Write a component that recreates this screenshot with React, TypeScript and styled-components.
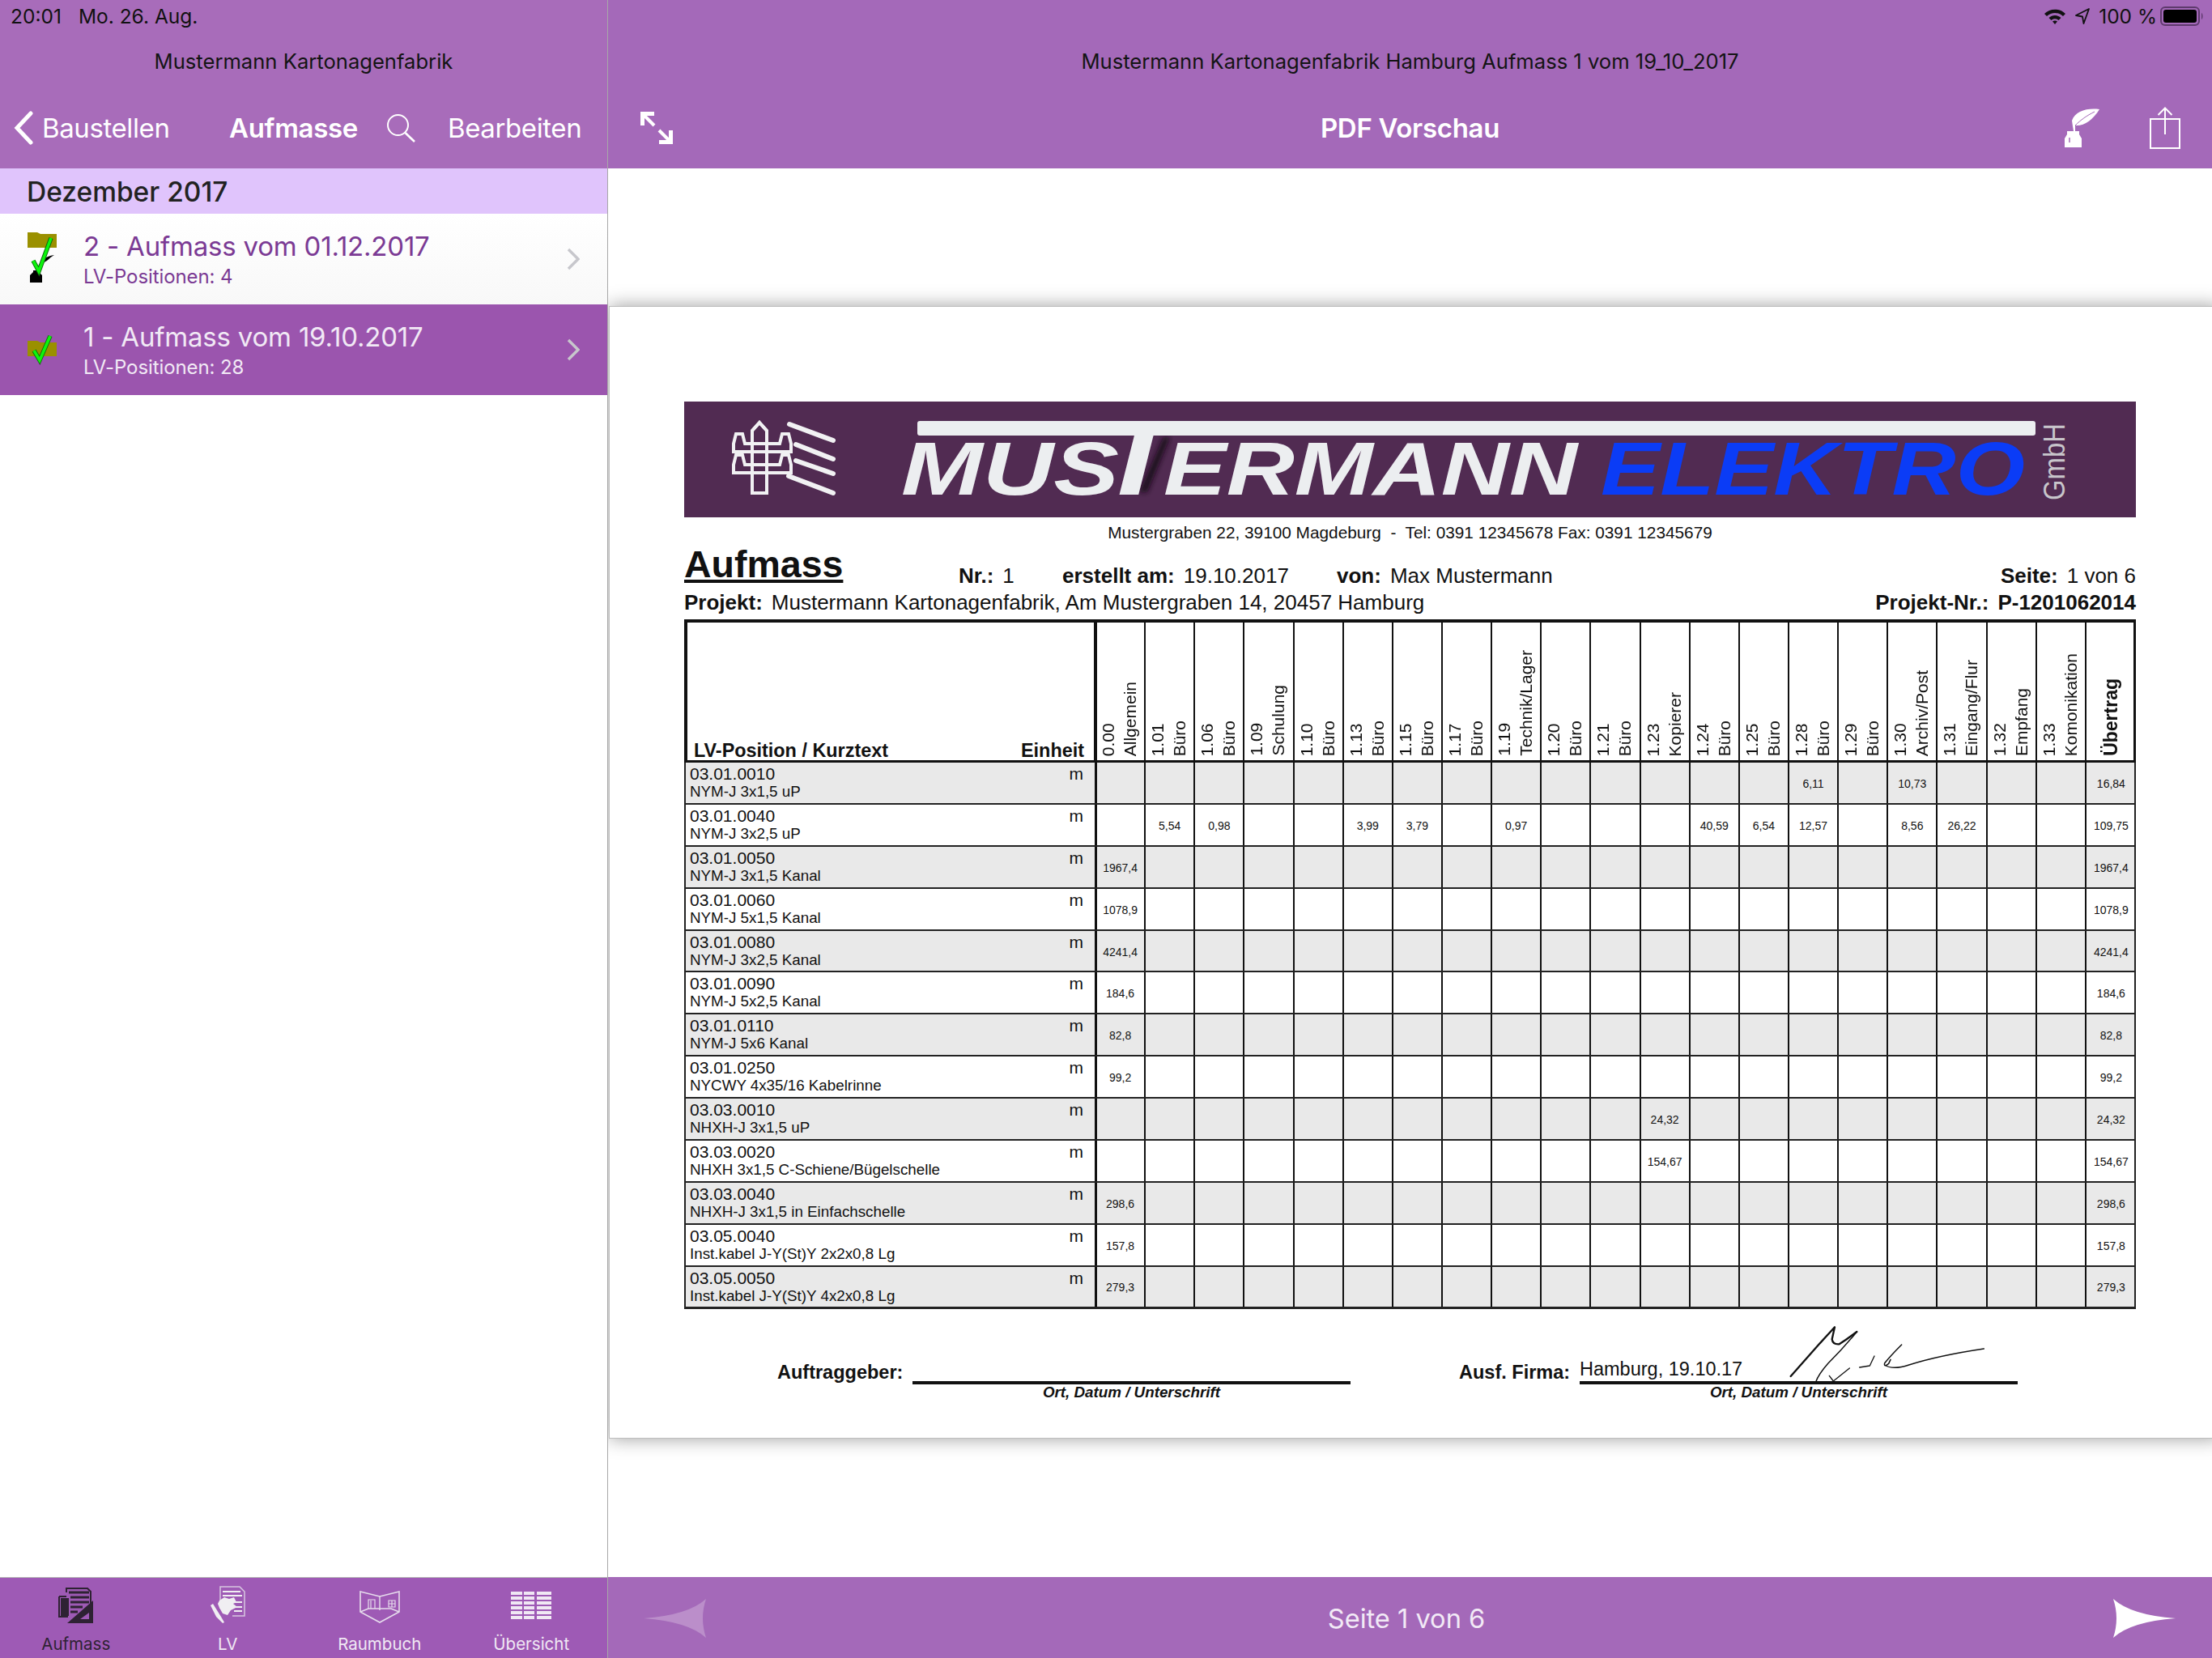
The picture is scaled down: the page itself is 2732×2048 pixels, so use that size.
import React from "react";
import styled, { createGlobalStyle } from "styled-components";

const ui = `Inter, "Noto Sans", sans-serif`;
const doc = `"Liberation Sans", Arial, sans-serif`;

const GlobalStyle = createGlobalStyle`
  * { box-sizing: border-box; }
  html, body { margin: 0; padding: 0; background: #fff; }
  #root { width: 2732px; height: 2048px; overflow: hidden; }
`;

const columns = [
  ["0.00", "Allgemein"], ["1.01", "Büro"], ["1.06", "Büro"], ["1.09", "Schulung"], ["1.10", "Büro"],
  ["1.13", "Büro"], ["1.15", "Büro"], ["1.17", "Büro"], ["1.19", "Technik/Lager"], ["1.20", "Büro"],
  ["1.21", "Büro"], ["1.23", "Kopierer"], ["1.24", "Büro"], ["1.25", "Büro"], ["1.28", "Büro"],
  ["1.29", "Büro"], ["1.30", "Archiv/Post"], ["1.31", "Eingang/Flur"], ["1.32", "Empfang"], ["1.33", "Komonikation"],
];

type Row = { code: string; text: string; values: Record<number, string>; total: string };

const rows: Row[] = [
  { code: "03.01.0010", text: "NYM-J 3x1,5 uP", values: { 14: "6,11", 16: "10,73" }, total: "16,84" },
  { code: "03.01.0040", text: "NYM-J 3x2,5 uP", values: { 1: "5,54", 2: "0,98", 5: "3,99", 6: "3,79", 8: "0,97", 12: "40,59", 13: "6,54", 14: "12,57", 16: "8,56", 17: "26,22" }, total: "109,75" },
  { code: "03.01.0050", text: "NYM-J 3x1,5 Kanal", values: { 0: "1967,4" }, total: "1967,4" },
  { code: "03.01.0060", text: "NYM-J 5x1,5 Kanal", values: { 0: "1078,9" }, total: "1078,9" },
  { code: "03.01.0080", text: "NYM-J 3x2,5 Kanal", values: { 0: "4241,4" }, total: "4241,4" },
  { code: "03.01.0090", text: "NYM-J 5x2,5 Kanal", values: { 0: "184,6" }, total: "184,6" },
  { code: "03.01.0110", text: "NYM-J 5x6 Kanal", values: { 0: "82,8" }, total: "82,8" },
  { code: "03.01.0250", text: "NYCWY 4x35/16 Kabelrinne", values: { 0: "99,2" }, total: "99,2" },
  { code: "03.03.0010", text: "NHXH-J 3x1,5 uP", values: { 11: "24,32" }, total: "24,32" },
  { code: "03.03.0020", text: "NHXH 3x1,5 C-Schiene/Bügelschelle", values: { 11: "154,67" }, total: "154,67" },
  { code: "03.03.0040", text: "NHXH-J 3x1,5 in Einfachschelle", values: { 0: "298,6" }, total: "298,6" },
  { code: "03.05.0040", text: "Inst.kabel J-Y(St)Y 2x2x0,8 Lg", values: { 0: "157,8" }, total: "157,8" },
  { code: "03.05.0050", text: "Inst.kabel J-Y(St)Y 4x2x0,8 Lg", values: { 0: "279,3" }, total: "279,3" },
];

const Screen = styled.div`
  display: grid;
  grid-template-columns: 751px 1fr;
  width: 2732px;
  height: 2048px;
  font-family: ${ui};
`;

const Sidebar = styled.aside`
  display: flex;
  flex-direction: column;
  border-right: 1px solid #a8a8a8;
  background: #fff;
`;

const Main = styled.main`
  display: flex;
  flex-direction: column;
  min-width: 0;
`;

const NavBar = styled.header<{ $bg: string }>`
  height: 208px;
  flex: none;
  background: ${(p) => p.$bg};
  display: flex;
  flex-direction: column;
`;

const StatusBar = styled.div`
  height: 40px;
  display: flex;
  align-items: center;
  justify-content: space-between;
  color: #111;
  font-size: 24.5px;
`;

const StatusLeft = styled.div`
  display: flex;
  gap: 21px;
  padding-left: 13px;
`;

const StatusRight = styled.div`
  display: flex;
  align-items: center;
  justify-content: flex-end;
  width: 100%;
  padding-right: 9px;
`;

const BarTitle = styled.div`
  height: 70px;
  display: flex;
  align-items: center;
  justify-content: center;
  color: #141414;
  font-size: 25.6px;
`;

const SideNavRow = styled.div`
  height: 96px;
  display: grid;
  grid-template-columns: 283px 194px 74px 1fr;
  align-items: center;
  color: #fff;
  font-size: 33px;
  letter-spacing: -0.4px;
`;

const BackLink = styled.div`
  display: flex;
  align-items: center;
  gap: 11px;
  padding-left: 17px;
`;

const NavHeading = styled.div`
  color: #fff;
  font-size: 33px;
  font-weight: 600;
  letter-spacing: -0.3px;
`;

const EditLink = styled.div`
  padding-left: 2px;
`;

const MainNavRow = styled.div`
  height: 96px;
  display: grid;
  grid-template-columns: 1fr auto 1fr;
  align-items: center;
`;

const ExpandWrap = styled.div`
  padding-left: 39px;
  display: flex;
`;

const ActionIcons = styled.div`
  display: flex;
  justify-content: flex-end;
  align-items: center;
  gap: 62px;
  padding-right: 39px;
`;

const SectionHeader = styled.div`
  height: 56px;
  flex: none;
  background: #e0c4fc;
  color: #222;
  display: flex;
  align-items: center;
  padding: 2px 0 0 33px;
  font-size: 33.5px;
  font-weight: 500;
`;

const ListRow = styled.div<{ $selected?: boolean }>`
  height: 112px;
  flex: none;
  display: grid;
  grid-template-columns: 103px 1fr 50px;
  align-items: center;
  background: ${(p) => (p.$selected ? "#9b55ae" : "linear-gradient(#ffffff, #f8f8f8)")};
  color: ${(p) => (p.$selected ? "#f1e9f5" : "#7b3a94")};
`;

const ListText = styled.div`
  display: flex;
  flex-direction: column;
`;

const ListTitle = styled.div`
  font-size: 33px;
  line-height: 40px;
  letter-spacing: -0.2px;
`;

const ListSub = styled.div`
  margin-top: 3px;
  font-size: 24px;
  line-height: 30px;
  letter-spacing: -0.1px;
`;

const Spacer = styled.div`
  flex: 1;
`;

const TabBar = styled.nav`
  height: 100px;
  flex: none;
  background: #9e5ab5;
  border-top: 1px solid #b4b4b4;
  display: grid;
  grid-template-columns: repeat(4, 1fr);
`;

const Tab = styled.div<{ $active?: boolean }>`
  display: flex;
  flex-direction: column;
  align-items: center;
  justify-content: flex-end;
  padding-bottom: 5px;
  color: ${(p) => (p.$active ? "#2e2233" : "#f0e8f4")};
  font-size: 20.5px;
`;

const TabIcon = styled.div<{ $raise?: number }>`
  height: 50px;
  margin-bottom: 13px;
  padding-bottom: ${(p) => p.$raise ?? 0}px;
  display: flex;
  align-items: flex-end;
`;

const Viewer = styled.div`
  flex: 1;
  min-height: 0;
  padding-top: 170px;
  padding-left: 1px;
  background: #fff;
  overflow: hidden;
`;

const Paper = styled.section`
  position: relative;
  height: 1399px;
  width: 1990px;
  padding: 117px 0 0 92px;
  background: #fff;
  box-shadow: 0 0 22px rgba(0, 0, 0, 0.38);
  border: 1px solid #bdbdbd;
  border-width: 1px 0 1px 1px;
  font-family: ${doc};
  color: #111;
`;

const PaperBody = styled.div`
  width: 1793px;
`;

const Banner = styled.svg`
  display: block;
`;

const Address = styled.div`
  margin-top: 7px;
  height: 24px;
  line-height: 24px;
  text-align: center;
  font-size: 20.8px;
  white-space: pre;
`;

const TitleRow = styled.div`
  height: 61px;
  display: grid;
  grid-template-columns: 339px 128px 339px 1fr auto;
  align-items: start;
`;

const Heading = styled.h1`
  margin: 4px 0 0;
  font-size: 46.5px;
  line-height: 46px;
  font-weight: 700;
  text-decoration: underline;
`;

const Meta = styled.div`
  margin-top: 28px;
  font-size: 26px;
  line-height: 26px;
  display: flex;
  gap: 11px;
  white-space: nowrap;
`;

const MetaLabel = styled.b`
  font-weight: 700;
`;

const ProjectRow = styled.div`
  height: 26px;
  display: flex;
  justify-content: space-between;
  font-size: 26px;
  line-height: 26px;
  white-space: nowrap;
`;

const ProjectPart = styled.div`
  display: flex;
  gap: 11px;
`;

const Table = styled.div`
  margin-top: 8px;
  width: 1793px;
  display: flex;
  flex-direction: column;
`;

const HeadRow = styled.div`
  height: 177px;
  display: grid;
  grid-template-columns: 505px repeat(21, 61.15px);
  border: 3px solid #111;
  border-width: 4px 3px 3px 4px;
`;

const HeadLabelCell = styled.div`
  display: flex;
  justify-content: space-between;
  align-items: flex-end;
  padding: 0 12px 0 8px;
  font-size: 23.4px;
  font-weight: 700;
  line-height: 23px;
  border-right: 4px solid #111;
  margin-right: -1px;
`;

const HeadCell = styled.div`
  display: flex;
  justify-content: center;
  align-items: flex-end;
  padding: 0 3px 5px 0;
  border-right: 2px solid #111;

  &:last-child {
    border-right: 0;
    padding-right: 0;
  }
`;

const VerticalLabel = styled.div<{ $strong?: boolean }>`
  writing-mode: vertical-rl;
  transform: rotate(180deg);
  white-space: nowrap;
  font-size: ${(p) => (p.$strong ? "23px" : "21px")};
  font-weight: ${(p) => (p.$strong ? 700 : 400)};
  line-height: 27px;
`;

const LabelLine = styled.span`
  display: block;
`;

const DataRow = styled.div<{ $shaded: boolean }>`
  height: 51.9px;
  display: grid;
  grid-template-columns: 507px repeat(21, 61.15px);
  background: ${(p) => (p.$shaded ? "#e9e9e9" : "#fff")};
  border: 2px solid #222;
  border-width: 0 2px 2px 2px;

  &:last-child {
    border-bottom-width: 3px;
  }
`;

const PositionCell = styled.div`
  display: flex;
  justify-content: space-between;
  padding: 3px 14px 0 5px;
  border-right: 3px solid #111;
  margin-right: -1px;
`;

const PositionCode = styled.div`
  font-size: 21px;
  line-height: 22px;
`;

const PositionText = styled.div`
  font-size: 18.8px;
  line-height: 21px;
  white-space: nowrap;
`;

const Unit = styled.div`
  font-size: 21px;
  line-height: 22px;
`;

const ValueCell = styled.div`
  display: flex;
  align-items: center;
  justify-content: center;
  font-size: 14px;
  padding-top: 2px;
  border-right: 2px solid #111;

  &:last-child {
    border-right: 0;
  }
`;

const SignRow = styled.div`
  display: flex;
  padding-left: 115px;
  margin-top: 59px;
`;

const SignLabel = styled.div`
  margin-top: 4px;
  font-size: 23.5px;
  line-height: 30px;
  font-weight: 700;
  white-space: nowrap;
  width: 167px;
`;

const SignBlock = styled.div<{ $gap?: number }>`
  width: 541px;
  margin-right: ${(p) => p.$gap ?? 0}px;
`;

const SignLine = styled.div`
  height: 34px;
  border-bottom: 4px solid #111;
  font-size: 23.5px;
  line-height: 30px;
`;

const SignCaption = styled.div`
  font-size: 18.8px;
  line-height: 20px;
  font-weight: 700;
  font-style: italic;
  text-align: center;
`;

const SecondLabel = styled(SignLabel)`
  width: 149px;
`;

const Signature = styled.svg`
  position: absolute;
  left: 1428px;
  top: 1242px;
`;

const PageBar = styled.footer`
  height: 100px;
  flex: none;
  background: #a469b9;
  display: flex;
  align-items: center;
  justify-content: space-between;
  padding: 2px 45px 0 44px;
`;

const PageLabel = styled.div`
  color: #f2eaf6;
  font-size: 32.6px;
  margin-right: 8px;
`;

function Chevron({ color }: { color: string }) {
  return (
    <svg width="16" height="28" viewBox="0 0 16 28">
      <path d="M2 2 L14 14 L2 26" fill="none" stroke={color} strokeWidth="3.4" />
    </svg>
  );
}

function RowIcon({ pending }: { pending?: boolean }) {
  const y = pending ? 23 : 45;
  return (
    <svg width="103" height="112" viewBox="0 0 103 112">
      <path d={`M34 ${y} L34 ${y + 19} L70 ${y + 19} L70 ${y + 2} L50 ${y + 2} L46 ${y} Z`} fill="#9a9000" />
      {pending && (
        <>
          <path d="M37 85 L37 76 L41 72 L41 70 L48 70 L48 72 L52 76 L52 85 Z" fill="#000" />
          <path d="M46 70 C47 60 56 52 67 51 C60 55 60 58 54 60 C50 62 49 66 47 70 Z" fill="#000" />
        </>
      )}
      <path
        d={pending ? "M41 58 L48 71 L63 30" : "M42 57 L49 69 L62 39"}
        fill="none"
        stroke="#106a10"
        strokeWidth="5.5"
      />
      <path
        d={pending ? "M41 58 L48 71 L63 30" : "M42 57 L49 69 L62 39"}
        fill="none"
        stroke="#0cf50c"
        strokeWidth="3.6"
      />
    </svg>
  );
}

function WifiIcon() {
  return (
    <svg width="28" height="20" viewBox="0 0 28 20" style={{ marginRight: 11 }}>
      <path d="M1 7 C8 0 20 0 27 7 L24 10 C18 4.500 10 4.500 4 10 Z" fill="#111" />
      <path d="M6.500 12 C11 8 17 8 21.500 12 L18.500 15 C16 12.800 12 12.800 9.500 15 Z" fill="#111" />
      <path d="M11 16.500 C13 15 15 15 17 16.500 L14 20 Z" fill="#111" />
    </svg>
  );
}

function LocationIcon() {
  return (
    <svg width="18" height="20" viewBox="0 0 18 20" style={{ marginRight: 11 }}>
      <path d="M17 1 L1 9 L9 10.500 L10.500 19 Z" fill="none" stroke="#111" strokeWidth="1.800" strokeLinejoin="round" />
    </svg>
  );
}

function BatteryIcon() {
  return (
    <svg width="55" height="24" viewBox="0 0 55 24" style={{ marginLeft: 4 }}>
      <rect x="1" y="1" width="47" height="22" rx="5" fill="none" stroke="#5f3a6e" strokeWidth="2" />
      <rect x="4" y="4" width="41" height="16" rx="3" fill="#000" />
      <path d="M51 8 C53 9 53 15 51 16 Z" fill="#5f3a6e" />
    </svg>
  );
}

function ExpandIcon() {
  return (
    <svg width="42" height="42" viewBox="0 0 42 42">
      <path d="M1 18 L1 1 L18 1 L18 6 L6 6 L6 18 Z" fill="#fff" />
      <path d="M4 4 L18 18" stroke="#fff" strokeWidth="4" />
      <path d="M41 24 L41 41 L24 41 L24 36 L36 36 L36 24 Z" fill="#fff" />
      <path d="M24 24 L38 38" stroke="#fff" strokeWidth="4" />
    </svg>
  );
}

function QuillIcon() {
  return (
    <svg width="43" height="48" viewBox="0 0 43 48">
      <path d="M3 28 L18 28 L18 32 L21 37 L21 48 L0 48 L0 37 L3 32 Z" fill="#fff" />
      <path d="M6 36 L6 42" stroke="#a469b9" strokeWidth="1.500" />
      <path d="M43 1 C28 -1 13 3 9 15 L10 22 L11 28 L13 28 L13 21 C24 22 35 14 43 1 Z" fill="#fff" />
      <path d="M13 21 C20 14 27 9 37 4" fill="none" stroke="#a469b9" strokeWidth="1" />
    </svg>
  );
}

function ShareIcon() {
  return (
    <svg width="38" height="52" viewBox="0 0 38 52">
      <rect x="1" y="15" width="36" height="36" fill="none" stroke="#fff" strokeWidth="2" />
      <path d="M19 1 L19 34 M10.500 10 L19 1.500 L27.500 10" fill="none" stroke="#fff" strokeWidth="2" />
    </svg>
  );
}

function PageArrow({ left }: { left?: boolean }) {
  return (
    <svg width="77" height="48" viewBox="0 0 77 48" style={left ? { transform: "scaleX(-1)" } : undefined}>
      <path d="M0 0 Q22 20 77 24 Q22 28 0 48 Q8 24 0 0 Z" fill="#fff" fillOpacity={left ? 0.25 : 1} />
    </svg>
  );
}

function AufmassIcon() {
  const c = "#2e2233";
  return (
    <svg width="43" height="44" viewBox="0 0 43 44">
      <path d="M10 6 L10 1 L36 1 L40 5 L40 22" fill="none" stroke={c} strokeWidth="2" />
      <path d="M1 11 L10 11 M1 11 L1 36 L12 36" fill="none" stroke={c} strokeWidth="2" />
      <rect x="3" y="13" width="10" height="22" fill={c} />
      <path d="M13 6 L38 6 M15 12 L38 12 M15 18 L38 18 M15 24 L30 24 M15 30 L24 30" stroke={c} strokeWidth="3" />
      <path d="M43 16 L43 44 L11 44 Z M38 31 L27 39 L38 39 Z" fill={c} fillRule="evenodd" />
    </svg>
  );
}

function LvIcon() {
  const c = "#f0eef2";
  return (
    <svg width="44" height="46" viewBox="0 0 44 46">
      <path d="M13 28 L13 1 L37 1 L43 7 L43 37 L28 37" fill="none" stroke="#d8c6e0" strokeWidth="1.500" />
      <path d="M16 7 L38 7 M16 12 L40 12 M28 20 L40 20 M30 26 L40 26 M30 31 L40 31" stroke={c} strokeWidth="2" />
      <path d="M12 18 L18 14 L24 16 L30 14 L33 20 L29 22 L34 26 L26 30 L22 36 L16 34 L12 27 L10 22 Z" fill={c} />
      <path d="M1 24 L4 22 L14 38 L18 45 L16 46 L8 38 Z" fill={c} />
    </svg>
  );
}

function RaumbuchIcon() {
  const c = "#e6dcec";
  return (
    <svg width="50" height="40" viewBox="0 0 50 40">
      <path d="M1 1 L25 7 L49 1 L49 26 L25 39 L1 26 Z" fill="none" stroke={c} strokeWidth="1.600" />
      <path d="M25 7 L25 24 M1 26 L11 22 L39 22 L49 26" fill="none" stroke={c} strokeWidth="1.400" />
      <path d="M11 22 L11 11 L19 11 L19 22 M14 22 L14 12" fill="none" stroke={c} strokeWidth="1.200" />
      <path d="M36 12 L44 12 L44 20 L36 20 Z M40 12 L40 20 M36 16 L44 16" fill="none" stroke={c} strokeWidth="1.200" />
    </svg>
  );
}

function UebersichtIcon() {
  const ys = [0, 6, 12, 18, 24, 30];
  return (
    <svg width="50" height="34" viewBox="0 0 50 34">
      {ys.map((y) => (
        <g key={y} fill="#f0e8f4">
          <rect x="0" y={y} width="14" height="4" />
          <rect x="16" y={y} width="13" height="4" />
          <rect x="32" y={y} width="18" height="4" />
        </g>
      ))}
    </svg>
  );
}

function LogoBanner() {
  const logoFont = { fontFamily: doc, fontWeight: 700, fontStyle: "italic" } as const;
  return (
    <Banner width="1793" height="143" viewBox="0 0 1793 143">
      <defs>
        <filter id="soft">
          <feGaussianBlur stdDeviation="3" />
        </filter>
      </defs>
      <rect width="1793" height="143" fill="#512b52" />
      <g fill="none" stroke="#f1f1f3" strokeWidth="4">
        <path d="M84 113 L84 36 L93 26 L102 36 L102 113 Z" />
        <path d="M61 62 L61 52 L64 40 L72 40 L75 52 L118 52 L121 40 L129 40 L132 52 L132 62 Z" fill="#512b52" />
        <path d="M61 88 L61 78 L64 66 L72 66 L75 78 L118 78 L121 66 L129 66 L132 78 L132 88 Z" fill="#512b52" />
        <path d="M84 113 L84 36 L93 26 L102 36 L102 113 Z" />
      </g>
      <g stroke="#f1f1f3" strokeWidth="6" strokeLinecap="round">
        <path d="M130 28 L184 48 M138 53 L184 71 M138 73 L184 89 M129 92 L184 113" />
      </g>
      <path d="M592 44 L562 112 L572 112 L600 44 Z" fill="#1c0a1e" filter="url(#soft)" />
      <rect x="288" y="24" width="1381" height="18" rx="3" fill="#ecEEF0" />
      <text x="268" y="115" textLength="269" lengthAdjust="spacingAndGlyphs" fontSize="93.600" fill="#ecEEF0" style={logoFont}>
        MUS
      </text>
      <text x="508" y="115" textLength="100" lengthAdjust="spacingAndGlyphs" fontSize="127" fill="#ecEEF0" style={logoFont}>
        T
      </text>
      <text x="592" y="115" textLength="511" lengthAdjust="spacingAndGlyphs" fontSize="93.600" fill="#ecEEF0" style={logoFont}>
        ERMANN
      </text>
      <text x="1132" y="115" textLength="524" lengthAdjust="spacingAndGlyphs" fontSize="93.600" fill="#0b3cf6" style={logoFont}>
        ELEKTRO
      </text>
      <text
        transform="translate(1705 122) rotate(-90)"
        textLength="95"
        lengthAdjust="spacingAndGlyphs"
        fontSize="37"
        fill="#c8c5cb"
        style={{ fontFamily: doc }}
      >
        GmbH
      </text>
    </Banner>
  );
}

function SignatureMark() {
  return (
    <Signature width="300" height="110" viewBox="0 0 900 330">
      <g fill="none" stroke="#111" strokeLinecap="round" strokeLinejoin="round">
        <path d="M92 237 L200 115 Q240 72 255 55 L245 100 Q248 120 272 118 Q300 100 337 72" strokeWidth="7" />
        <path d="M337 72 Q290 130 230 190 Q195 230 185 258" strokeWidth="4.500" />
        <path d="M235 235 L250 255 L310 207" strokeWidth="4" />
        <path d="M347 204 L385 198 L402 162" strokeWidth="4" />
        <path d="M503 120 Q465 158 440 188 Q436 205 455 190 L462 175 M440 195 Q470 215 530 195 Q640 160 808 135" strokeWidth="4.500" />
      </g>
    </Signature>
  );
}

export default function App() {
  return (
    <Screen>
      <GlobalStyle />
      <Sidebar>
        <NavBar $bg="#a86cba">
          <StatusBar>
            <StatusLeft>
              <span>20:01</span>
              <span>Mo. 26. Aug.</span>
            </StatusLeft>
          </StatusBar>
          <BarTitle>Mustermann Kartonagenfabrik</BarTitle>
          <SideNavRow>
            <BackLink>
              <svg width="24" height="42" viewBox="0 0 24 42">
                <path d="M21 3 L4 21 L21 39" fill="none" stroke="#fff" strokeWidth="5" strokeLinecap="round" />
              </svg>
              <span>Baustellen</span>
            </BackLink>
            <NavHeading>Aufmasse</NavHeading>
            <svg width="36" height="36" viewBox="0 0 36 36">
              <circle cx="14.500" cy="14.500" r="12.500" fill="none" stroke="#fff" strokeWidth="2" />
              <path d="M23.500 24 L35 35" stroke="#fff" strokeWidth="2.600" />
            </svg>
            <EditLink>Bearbeiten</EditLink>
          </SideNavRow>
        </NavBar>
        <SectionHeader>Dezember 2017</SectionHeader>
        <ListRow>
          <RowIcon pending />
          <ListText>
            <ListTitle>2 - Aufmass vom 01.12.2017</ListTitle>
            <ListSub>LV-Positionen: 4</ListSub>
          </ListText>
          <Chevron color="#c7c7cc" />
        </ListRow>
        <ListRow $selected>
          <RowIcon />
          <ListText>
            <ListTitle>1 - Aufmass vom 19.10.2017</ListTitle>
            <ListSub>LV-Positionen: 28</ListSub>
          </ListText>
          <Chevron color="#c7c7cc" />
        </ListRow>
        <Spacer />
        <TabBar>
          <Tab $active>
            <TabIcon>
              <AufmassIcon />
            </TabIcon>
            Aufmass
          </Tab>
          <Tab>
            <TabIcon>
              <LvIcon />
            </TabIcon>
            LV
          </Tab>
          <Tab>
            <TabIcon>
              <RaumbuchIcon />
            </TabIcon>
            Raumbuch
          </Tab>
          <Tab>
            <TabIcon $raise={5}>
              <UebersichtIcon />
            </TabIcon>
            Übersicht
          </Tab>
        </TabBar>
      </Sidebar>

      <Main>
        <NavBar $bg="#a469b9">
          <StatusBar>
            <StatusRight>
              <WifiIcon />
              <LocationIcon />
              <span>100 %</span>
              <BatteryIcon />
            </StatusRight>
          </StatusBar>
          <BarTitle>Mustermann Kartonagenfabrik Hamburg Aufmass 1 vom 19_10_2017</BarTitle>
          <MainNavRow>
            <ExpandWrap>
              <ExpandIcon />
            </ExpandWrap>
            <NavHeading>PDF Vorschau</NavHeading>
            <ActionIcons>
              <QuillIcon />
              <ShareIcon />
            </ActionIcons>
          </MainNavRow>
        </NavBar>

        <Viewer>
          <Paper>
            <PaperBody>
              <LogoBanner />
              <Address>{"Mustergraben 22, 39100 Magdeburg  -  Tel: 0391 12345678 Fax: 0391 12345679"}</Address>
              <TitleRow>
                <Heading>Aufmass</Heading>
                <Meta>
                  <MetaLabel>Nr.:</MetaLabel>
                  <span>1</span>
                </Meta>
                <Meta>
                  <MetaLabel>erstellt am:</MetaLabel>
                  <span>19.10.2017</span>
                </Meta>
                <Meta>
                  <MetaLabel>von:</MetaLabel>
                  <span>Max Mustermann</span>
                </Meta>
                <Meta>
                  <MetaLabel>Seite:</MetaLabel>
                  <span>1 von 6</span>
                </Meta>
              </TitleRow>
              <ProjectRow>
                <ProjectPart>
                  <MetaLabel>Projekt:</MetaLabel>
                  <span>Mustermann Kartonagenfabrik, Am Mustergraben 14, 20457 Hamburg</span>
                </ProjectPart>
                <ProjectPart>
                  <MetaLabel>Projekt-Nr.:</MetaLabel>
                  <MetaLabel>P-1201062014</MetaLabel>
                </ProjectPart>
              </ProjectRow>

              <Table>
                <HeadRow>
                  <HeadLabelCell>
                    <span>LV-Position / Kurztext</span>
                    <span>Einheit</span>
                  </HeadLabelCell>
                  {columns.map(([nr, name]) => (
                    <HeadCell key={nr}>
                      <VerticalLabel>
                        <LabelLine>{nr}</LabelLine>
                        <LabelLine>{name}</LabelLine>
                      </VerticalLabel>
                    </HeadCell>
                  ))}
                  <HeadCell>
                    <VerticalLabel $strong>Übertrag</VerticalLabel>
                  </HeadCell>
                </HeadRow>
                {rows.map((row, i) => (
                  <DataRow key={row.code} $shaded={i % 2 === 0}>
                    <PositionCell>
                      <div>
                        <PositionCode>{row.code}</PositionCode>
                        <PositionText>{row.text}</PositionText>
                      </div>
                      <Unit>m</Unit>
                    </PositionCell>
                    {columns.map(([nr], c) => (
                      <ValueCell key={nr}>{row.values[c]}</ValueCell>
                    ))}
                    <ValueCell>{row.total}</ValueCell>
                  </DataRow>
                ))}
              </Table>

              <SignRow>
                <SignLabel>Auftraggeber:</SignLabel>
                <SignBlock $gap={134}>
                  <SignLine />
                  <SignCaption>Ort, Datum / Unterschrift</SignCaption>
                </SignBlock>
                <SecondLabel>Ausf. Firma:</SecondLabel>
                <SignBlock>
                  <SignLine>Hamburg, 19.10.17</SignLine>
                  <SignCaption>Ort, Datum / Unterschrift</SignCaption>
                </SignBlock>
              </SignRow>
            </PaperBody>
            <SignatureMark />
          </Paper>
        </Viewer>

        <PageBar>
          <PageArrow left />
          <PageLabel>Seite 1 von 6</PageLabel>
          <PageArrow />
        </PageBar>
      </Main>
    </Screen>
  );
}
